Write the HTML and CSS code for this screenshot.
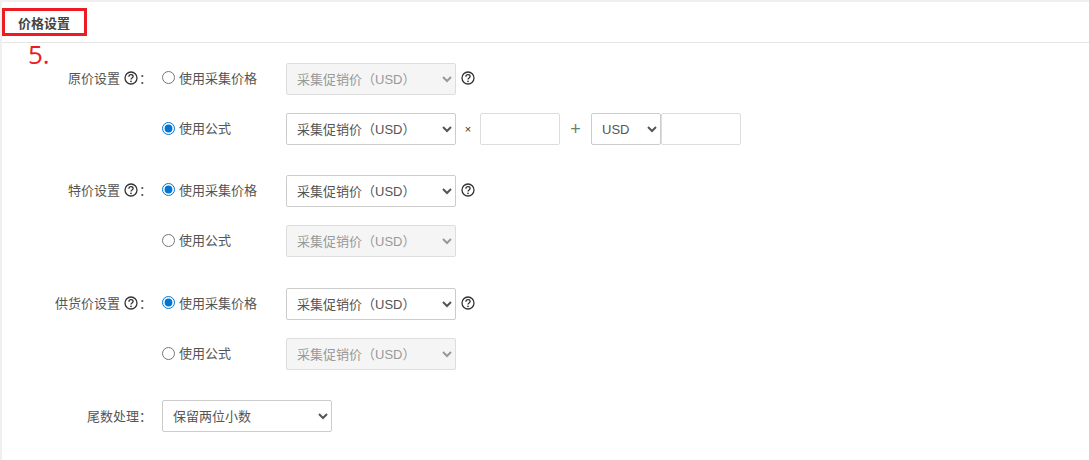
FILE: index.html
```html
<!DOCTYPE html>
<html lang="zh">
<head>
<meta charset="utf-8">
<title>价格设置</title>
<link rel="stylesheet" href="styles.css">
</head>
<body>
<svg width="0" height="0" class="defs"><defs>
<symbol id="q" viewBox="0 0 14 14"><circle cx="7" cy="7" r="6" fill="none" stroke="currentColor" stroke-width="1.3"/><path d="M4.9 5.7a2.1 2.1 0 0 1 2.1-2c1.3 0 2.1.8 2.1 1.8 0 1.5-2.1 1.6-2.1 3.1" fill="none" stroke="currentColor" stroke-width="1.3"/><circle cx="7" cy="10.3" r=".85" fill="currentColor"/></symbol>
</defs></svg>
<main class="panel">
  <header class="head"><h2 class="title">价格设置</h2></header>
  <div class="mark"></div>
  <div class="step">5.</div>
  <form class="form">
    <section class="group">
      <div class="row row-first">
        <div class="label">原价设置<svg class="q q-label"><use href="#q"/></svg>：</div>
        <label class="radio"><input type="radio" name="a"><span>使用采集价格</span></label>
        <select class="sel" disabled><option>采集促销价（USD）</option></select>
        <svg class="q after"><use href="#q"/></svg>
      </div>
      <div class="row">
        <div class="label"></div>
        <label class="radio"><input type="radio" name="a" checked><span>使用公式</span></label>
        <select class="sel"><option>采集促销价（USD）</option></select>
        <span class="times">×</span>
        <input class="num" type="text">
        <span class="plus">+</span>
        <select class="cur"><option>USD</option></select>
        <input class="num" type="text">
      </div>
    </section>
    <section class="group">
      <div class="row row-first">
        <div class="label">特价设置<svg class="q q-label"><use href="#q"/></svg>：</div>
        <label class="radio"><input type="radio" name="b" checked><span>使用采集价格</span></label>
        <select class="sel"><option>采集促销价（USD）</option></select>
        <svg class="q after"><use href="#q"/></svg>
      </div>
      <div class="row">
        <div class="label"></div>
        <label class="radio"><input type="radio" name="b"><span>使用公式</span></label>
        <select class="sel" disabled><option>采集促销价（USD）</option></select>
      </div>
    </section>
    <section class="group group-wide">
      <div class="row row-first">
        <div class="label">供货价设置<svg class="q q-label"><use href="#q"/></svg>：</div>
        <label class="radio"><input type="radio" name="c" checked><span>使用采集价格</span></label>
        <select class="sel"><option>采集促销价（USD）</option></select>
        <svg class="q after"><use href="#q"/></svg>
      </div>
      <div class="row">
        <div class="label"></div>
        <label class="radio"><input type="radio" name="c"><span>使用公式</span></label>
        <select class="sel" disabled><option>采集促销价（USD）</option></select>
      </div>
    </section>
    <section class="group">
      <div class="row">
        <div class="label label-plain">尾数处理：</div>
        <select class="sel"><option>保留两位小数</option></select>
      </div>
    </section>
  </form>
</main>
</body>
</html>
```
FILE: styles.css
```css
html, body { margin: 0; height: 100%; overflow: hidden; }
body {
  background: #f0f0f0;
  padding: 2px 0 0 2px;
  box-sizing: border-box;
  font-family: "Liberation Sans", "Noto Sans CJK SC", sans-serif;
  font-size: 13px;
  color: #555;
}
.defs { position: absolute; }
.panel { position: relative; background: #fff; height: 100%; }
.head { height: 40px; border-bottom: 1px solid #e6e6e6; display: flex; align-items: center; padding-left: 16px; }
.title { margin: 0; font-size: 13px; font-weight: 700; color: #444; }
.mark { position: absolute; left: 0; top: 6px; width: 85px; height: 28px; border: 3px solid #ed1c24; box-sizing: border-box; }
.step { position: absolute; left: 26px; top: 37px; font-family: "Open Sans", sans-serif; font-size: 26px; line-height: 30px; color: #ed1c24; }
.form { padding-top: 20px; display: flex; flex-direction: column; gap: 30px; }
.group { display: flex; flex-direction: column; gap: 18px; }
.group-wide { margin-top: 1px; }
.row { display: flex; align-items: center; height: 32px; }
.label { width: 150px; flex: none; white-space: nowrap; display: flex; justify-content: flex-end; align-items: center; margin: -3px 10px 0 0; }
.label-plain { margin-top: -1px; }
.q { width: 14px; height: 14px; color: #333; flex: none; }
.q-label { margin: 0 1px 0 4px; }
.after { margin: -3px 0 0 5px; }
.radio { width: 124px; flex: none; display: flex; align-items: center; margin-top: -3px; }
.row-first .radio { margin-top: -4px; }
.radio input { margin: 1px 4px 0 0; width: 13px; height: 13px; accent-color: #0075d2; }
select, .num { box-sizing: border-box; height: 32px; font: inherit; border: 1px solid #ccc; border-radius: 2px; background-color: #fff; color: #555; }
.sel { width: 170px; padding: 0 0 0 6px; flex: none; }
.sel:disabled { background-color: #f5f5f5; color: #999; opacity: 1; border-color: #ddd; }
.cur { width: 70px; padding: 0 0 0 6px; }
.num { width: 80px; border-color: #ddd; padding: 0 6px; outline: none; }
.times { width: 24px; text-align: center; font-size: 11px; color: #333; flex: none; }
.plus { width: 31px; text-align: center; font-size: 18px; font-weight: 400; color: #6b7f6b; flex: none; }
```
